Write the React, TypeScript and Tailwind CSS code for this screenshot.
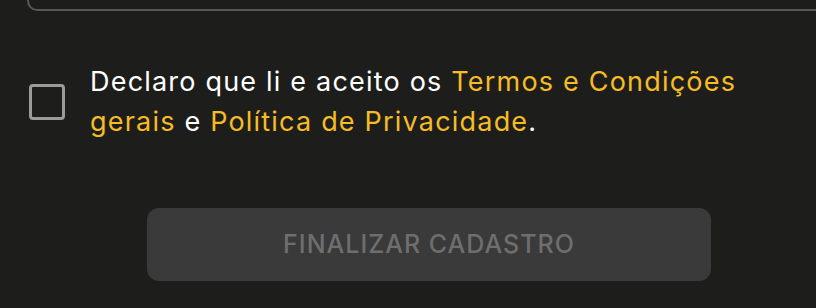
export default function App() {
  return (
    <div className="w-[816px] h-[308px] overflow-hidden bg-[#1d1e1b] font-['Inter','Noto_Sans',sans-serif]">
      <div className="ml-[27px] w-[804px] flex flex-col">
        {/* campo anterior (cortado) */}
        <div className="h-[60px] -mt-[49px] rounded-[10px] border-2 border-[#575856]" />

        <label className="mt-[51px] flex items-center gap-[25px] pl-[2px]">
          <span className="w-[36px] h-[36px] shrink-0 rounded-[4px] border-[3px] border-[#9b9b9b]" />
          <span className="w-[680px] text-[27px] leading-[40px] tracking-[1.2px] text-white">
            Declaro que li e aceito os <a className="text-[#f6bc25]">Termos e Condições</a>
            <br />
            <a className="text-[#f6bc25]">gerais</a> e <a className="text-[#f6bc25]">Política de Privacidade</a>.
          </span>
        </label>

        <button
          disabled
          className="mt-[66px] mx-auto w-[564px] h-[73px] rounded-[12px] bg-[#3a3a3a] text-[25px] font-medium tracking-[1px] text-[#6e6e6e]"
        >
          FINALIZAR CADASTRO
        </button>
      </div>
    </div>
  );
}
